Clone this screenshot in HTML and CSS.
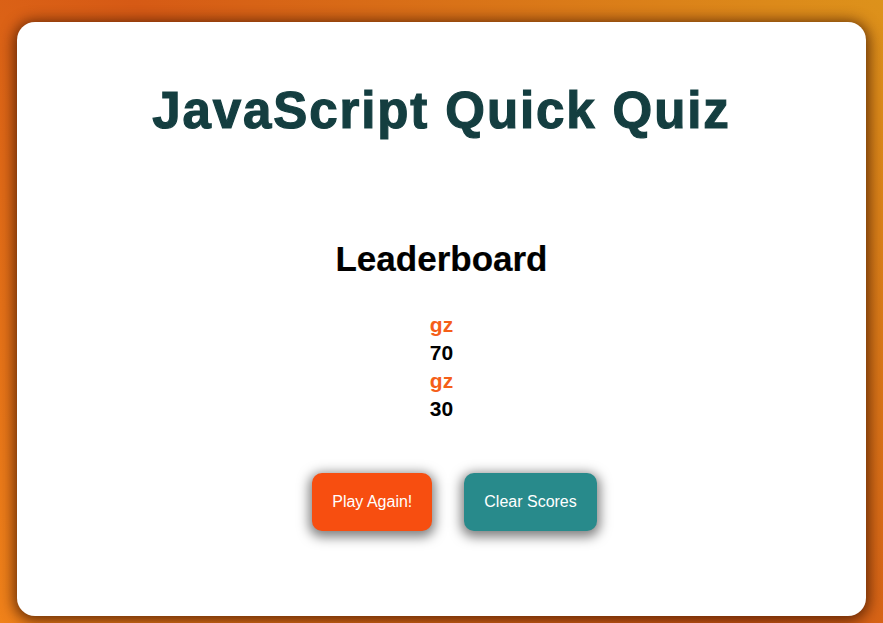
FILE: index.html
```html
<!DOCTYPE html>
<html lang="en">
<head>
<meta charset="utf-8">
<title>JavaScript Quick Quiz</title>
<link rel="stylesheet" href="styles.css">
</head>
<body>
<main class="card">
  <h1 class="title">JavaScript Quick Quiz</h1>
  <section class="board">
    <h2 class="board-title">Leaderboard</h2>
    <ol class="scores">
      <li class="entry"><span class="name">gz</span><span class="score">70</span></li>
      <li class="entry"><span class="name">gz</span><span class="score">30</span></li>
    </ol>
    <div class="actions">
      <button class="btn btn-play">Play Again!</button>
      <button class="btn btn-clear">Clear Scores</button>
    </div>
  </section>
</main>
</body>
</html>
```

FILE: styles.css
```css
* { box-sizing: border-box; }

html, body {
  margin: 0;
  height: 100%;
}

body {
  padding: 22px 17px 7px;
  background: linear-gradient(45deg, #f0821a 0%, #d65a15 50%, #dd921b 100%);
  font-family: "Liberation Sans", Arial, sans-serif;
  overflow: hidden;
}

.card {
  height: 594px;
  background: #fff;
  border-radius: 18px;
  box-shadow: 0 2px 14px 3px rgba(60, 20, 0, 0.75);
  padding-top: 59px;
  display: flex;
  flex-direction: column;
  align-items: center;
}

.title {
  margin: 0;
  font-size: 51px;
  line-height: 60px;
  font-weight: 700;
  letter-spacing: 1.9px;
  color: #143e40;
  text-align: center;
  -webkit-text-stroke: 1.2px #143e40;
}

.board {
  margin-top: 97px;
  display: flex;
  flex-direction: column;
  align-items: center;
}

.board-title {
  margin: 0;
  font-size: 35px;
  line-height: 42px;
  font-weight: 700;
  color: #000;
  -webkit-text-stroke: 0.2px #000;
}

.scores {
  list-style: none;
  margin: 31px 0 0;
  padding: 0;
  text-align: center;
  font-size: 21px;
  font-weight: 700;
}

.entry {
  display: flex;
  flex-direction: column;
}

.name {
  line-height: 28px;
  color: #f55f19;
}

.score {
  line-height: 28px;
  color: #000;
}

.actions {
  margin-top: 50px;
  padding-left: 26px;
  display: flex;
  gap: 32px;
}

.btn {
  font-family: "Liberation Sans", Arial, sans-serif;
  font-size: 16px;
  line-height: 18px;
  color: #fff;
  border: none;
  border-radius: 10px;
  padding: 20px 20px;
  box-shadow: 0 3px 12px 3px rgba(0, 0, 0, 0.5);
  cursor: pointer;
}

.btn-play {
  background: #f74e10;
}

.btn-clear {
  background: #288a8b;
}
```
